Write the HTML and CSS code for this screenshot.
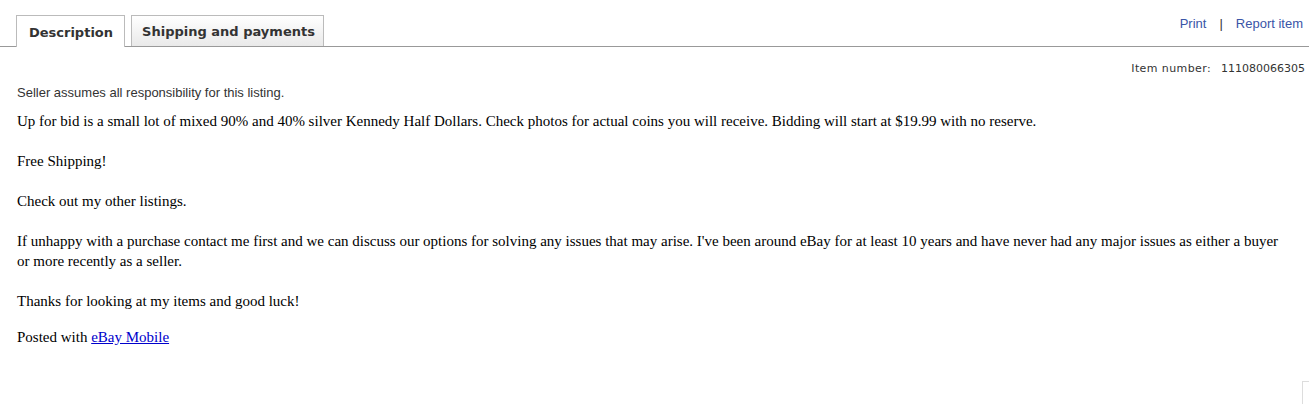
FILE: index.html
```html
<!DOCTYPE html>
<html>
<head>
<meta charset="utf-8">
<link rel="stylesheet" href="styles.css">
</head>
<body>
<div class="tabbar">
  <div class="tab tab-active">Description</div>
  <div class="tab tab-idle">Shipping and payments</div>
  <div class="tools"><a href="#" class="tool">Print</a><span class="sep">|</span><a href="#" class="tool">Report item</a></div>
</div>
<div class="content">
  <div class="itemnum"><span class="lbl">Item number:</span><span class="num">111080066305</span></div>
  <div class="disclaimer">Seller assumes all responsibility for this listing.</div>
  <div class="desc">
    Up for bid is a small lot of mixed 90% and 40% silver Kennedy Half Dollars. Check photos for actual coins you will receive. Bidding will start at $19.99 with no reserve.<br><br>
    Free Shipping!<br><br>
    Check out my other listings.<br><br>
    If unhappy with a purchase contact me first and we can discuss our options for solving any issues that may arise. I've been around eBay for at least 10 years and have never had any major issues as either a buyer or more recently as a seller.<br><br>
    Thanks for looking at my items and good luck!
  </div>
  <p class="posted">Posted with <a href="#" class="mobile">eBay Mobile</a></p>
</div>
<div class="corner"></div>
</body>
</html>
```
FILE: styles.css
```css
html, body {
  margin: 0;
  padding: 0;
  background: #fff;
}
body {
  height: 404px;
  overflow: hidden;
}
.tabbar {
  display: flex;
  align-items: flex-end;
  height: 47px;
  box-sizing: border-box;
  padding-left: 16px;
  border-bottom: 1px solid #999;
  width: 1309px;
}
.tab {
  font-family: "DejaVu Sans", Verdana, sans-serif;
  font-weight: bold;
  font-size: 13px;
  color: #333;
  box-sizing: border-box;
  border: 1px solid #bbb;
  border-bottom: none;
  text-align: center;
}
.tab-active {
  width: 109px;
  background: #fff;
  height: 32px;
  line-height: 33px;
  margin-bottom: -1px;
  padding-left: 1px;
}
.tab-idle {
  width: 193px;
  margin-left: 6px;
  background: linear-gradient(#fff, #e9e9e9);
  height: 31px;
  line-height: 32px;
  padding-left: 2px;
}
.tools {
  margin-left: auto;
  align-self: flex-start;
  margin-top: 16px;
  margin-right: 6px;
  font-family: "Liberation Sans", Arial, sans-serif;
  font-size: 13px;
  color: #333;
}
.tool {
  color: #3a55a7;
  text-decoration: none;
}
.sep {
  margin: 0 13px;
}
.content {
  padding: 0 16px 0 17px;
}
.itemnum {
  text-align: right;
  font-family: "DejaVu Sans", Verdana, sans-serif;
  font-size: 11px;
  color: #333;
  margin-top: 15px;
  margin-right: -12px;
  line-height: 13px;
}
.itemnum .lbl {
  letter-spacing: 0.4px;
  margin-right: 10px;
}
.disclaimer {
  font-family: "Liberation Sans", Arial, sans-serif;
  font-size: 13px;
  color: #333;
  margin-top: 10px;
  line-height: 16px;
}
.desc {
  font-family: "Liberation Serif", "Times New Roman", serif;
  font-size: 15px;
  line-height: 20px;
  color: #000;
  margin-top: 10px;
}
.posted {
  font-family: "Liberation Serif", "Times New Roman", serif;
  font-size: 15px;
  line-height: 20px;
  margin: 16px 0 0;
}
.mobile {
  color: #00c;
}
.corner {
  margin: 34px 0 0 1302px;
  width: 10px;
  height: 30px;
  border-top: 1px solid #ddd;
  border-left: 1px solid #ddd;
}
```
